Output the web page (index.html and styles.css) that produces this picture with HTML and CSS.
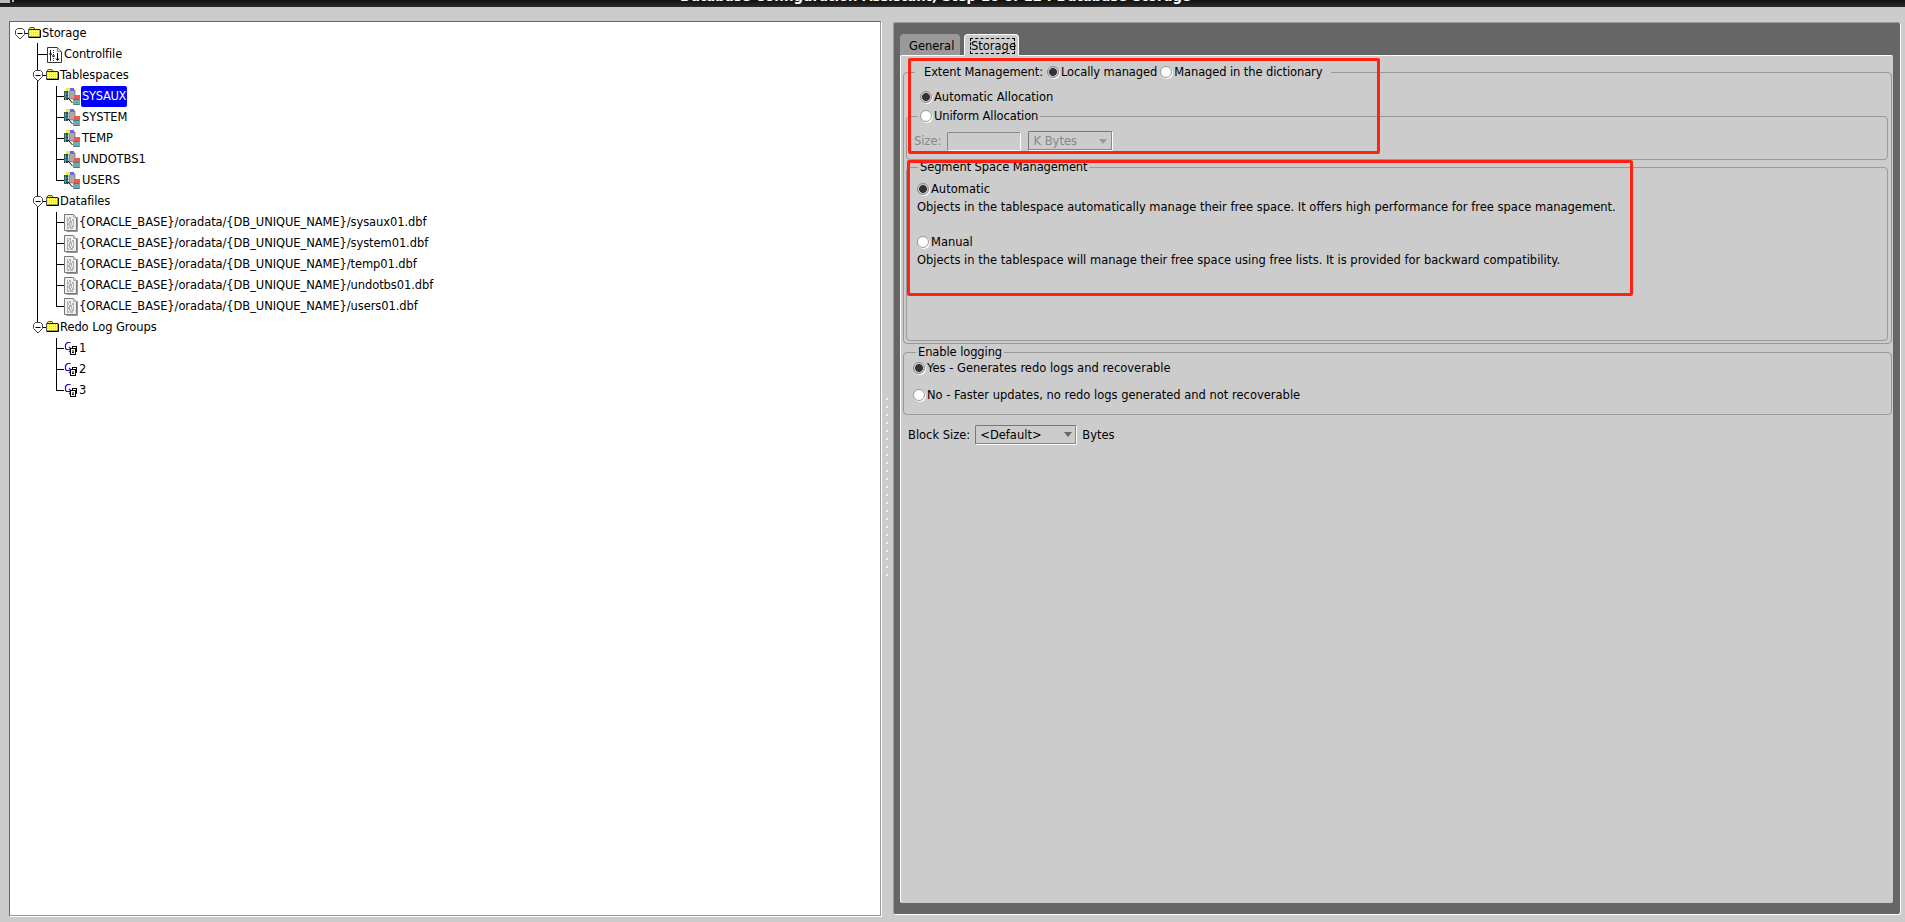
FILE: index.html
```
<!DOCTYPE html>
<html lang="en">
<head>
<meta charset="utf-8">
<title>Database Configuration Assistant</title>
<link rel="stylesheet" href="styles.css">
</head>
<body>
<svg class="defs" width="0" height="0" aria-hidden="true">
  <defs>
    <pattern id="dither" width="2" height="2" patternUnits="userSpaceOnUse">
      <rect width="2" height="2" fill="#ffff55"/>
      <rect width="1" height="1" fill="#fff6a0"/>
      <rect x="1" y="1" width="1" height="1" fill="#e8d830"/>
    </pattern>
    <symbol id="expander" viewBox="0 0 14 12">
      <path d="M9 5.500h5" stroke="#000" fill="none"/>
      <path d="M2.500.5h5l2 2v4l-4.500 4.500-4.500-4.500v-4z" fill="#fff" stroke="#444"/>
      <path d="M2.500 5.500h5" stroke="#000" fill="none"/>
    </symbol>
    <symbol id="folder" viewBox="0 0 13 11">
      <path d="M.5 2.500l1.500-2h4l1 2h5v7.500h-11.500z" fill="url(#dither)" stroke="#555"/>
      <path d="M1 2.500h11" stroke="#222"/>
      <path d="M12.500 3v7.500h-12" stroke="#000" fill="none"/>
    </symbol>
    <symbol id="space" viewBox="0 0 16 17">
      <rect x="5" y="2" width="6" height="9" fill="#aaa" stroke="#555" stroke-width=".6"/>
      <rect x="2" y="0" width="4" height="3" fill="#eeee44"/>
      <rect x="6" y="0" width="4" height="3" fill="#6666ee"/>
      <rect x="0" y="3" width="4" height="9" fill="#1d4d4d"/>
      <path d="M1.500 3v9M0 6h4M0 9h4" stroke="#7aa" stroke-width=".7"/>
      <rect x="10" y="7" width="6" height="4" fill="#ee5555"/>
      <path d="M4 10l4.500 5" stroke="#000"/>
      <rect x="9" y="11" width="7" height="6" rx="1" fill="#3f7f7f"/>
      <path d="M9 13h7M9 15h7" stroke="#cfe" stroke-width=".7"/>
    </symbol>
    <symbol id="control" viewBox="0 0 15 16">
      <path d="M.5.500h10l4 4v11h-14z" fill="#fff" stroke="#333"/>
      <path d="M10.500.500v4h4" fill="#ddd" stroke="#888"/>
      <path d="M3.500 3v11" stroke="#222"/>
      <path d="M6.500 3v11" stroke="#22c" stroke-dasharray="1 1"/>
      <path d="M2 7h3M5 9h3" stroke="#000"/>
      <path d="M10.500 6v7M9 11.500l1.500 2 1.500-2" stroke="#000" fill="none"/>
    </symbol>
    <symbol id="datafile" viewBox="0 0 14 18">
      <path d="M13.500 3v14.500h-11" stroke="#999" fill="none"/>
      <path d="M.5.500h9l3 3v13h-12z" fill="#f0f0f0" stroke="#777"/>
      <path d="M9.500.500v3h3" fill="#ddd" stroke="#aaa"/>
      <path d="M3 4h1M5 4h2M3 6h2M6 6h1M8 6h2M3 8h1M5 8h3M9 8h1M3 10h3M7 10h1M9 10h1M3 12h1M5 12h2M8 12h2M3 14h2M6 14h3" stroke="#777"/>
    </symbol>
    <symbol id="redo" viewBox="0 0 13 13">
      <path d="M6.500.5h-3l-2 2v4l1 1h4" fill="none" stroke="#1010e8" stroke-width="1.200"/>
      <path d="M5 5l2.500 2.500-2.500 2.500" fill="none" stroke="#1010e8" stroke-width="1.200"/>
      <rect x="8.500" y="4.500" width="4" height="5" fill="#fff" stroke="#000"/>
      <rect x="6.500" y="6.500" width="5" height="6" fill="#fff" stroke="#000"/>
      <path d="M8 9h2M8 10.500h2" stroke="#000"/>
    </symbol>
  </defs>
</svg>

<header class="titlebar">
  <svg class="winicon" width="16" height="4" viewBox="0 0 16 4" aria-hidden="true"><path d="M0 0h10v3H0zM12 0h2v2h-2z" fill="#bbb"/></svg>
  <span class="title">Database Configuration Assistant, Step 10 of 12 : Database Storage</span>
</header>

<main class="main">
  <section class="treepane">
    <ul class="tree">
      <li>
        <div class="row"><svg class="exp"><use href="#expander"/></svg><svg class="fld"><use href="#folder"/></svg><span class="lbl">Storage</span></div>
        <ul class="l1">
          <li><div class="row leaf"><svg class="ctl"><use href="#control"/></svg><span class="lbl">Controlfile</span></div></li>
          <li>
            <div class="row"><svg class="exp"><use href="#expander"/></svg><svg class="fld"><use href="#folder"/></svg><span class="lbl">Tablespaces</span></div>
            <ul class="l2">
              <li><div class="row"><svg class="spc"><use href="#space"/></svg><span class="lbl sel">SYSAUX</span></div></li>
              <li><div class="row"><svg class="spc"><use href="#space"/></svg><span class="lbl">SYSTEM</span></div></li>
              <li><div class="row"><svg class="spc"><use href="#space"/></svg><span class="lbl">TEMP</span></div></li>
              <li><div class="row"><svg class="spc"><use href="#space"/></svg><span class="lbl">UNDOTBS1</span></div></li>
              <li><div class="row"><svg class="spc"><use href="#space"/></svg><span class="lbl">USERS</span></div></li>
            </ul>
          </li>
          <li>
            <div class="row"><svg class="exp"><use href="#expander"/></svg><svg class="fld"><use href="#folder"/></svg><span class="lbl">Datafiles</span></div>
            <ul class="l2">
              <li><div class="row"><svg class="dat"><use href="#datafile"/></svg><span class="lbl">{ORACLE_BASE}/oradata/{DB_UNIQUE_NAME}/sysaux01.dbf</span></div></li>
              <li><div class="row"><svg class="dat"><use href="#datafile"/></svg><span class="lbl">{ORACLE_BASE}/oradata/{DB_UNIQUE_NAME}/system01.dbf</span></div></li>
              <li><div class="row"><svg class="dat"><use href="#datafile"/></svg><span class="lbl">{ORACLE_BASE}/oradata/{DB_UNIQUE_NAME}/temp01.dbf</span></div></li>
              <li><div class="row"><svg class="dat"><use href="#datafile"/></svg><span class="lbl">{ORACLE_BASE}/oradata/{DB_UNIQUE_NAME}/undotbs01.dbf</span></div></li>
              <li><div class="row"><svg class="dat"><use href="#datafile"/></svg><span class="lbl">{ORACLE_BASE}/oradata/{DB_UNIQUE_NAME}/users01.dbf</span></div></li>
            </ul>
          </li>
          <li>
            <div class="row"><svg class="exp"><use href="#expander"/></svg><svg class="fld"><use href="#folder"/></svg><span class="lbl">Redo Log Groups</span></div>
            <ul class="l2">
              <li><div class="row"><svg class="rdo"><use href="#redo"/></svg><span class="lbl">1</span></div></li>
              <li><div class="row"><svg class="rdo"><use href="#redo"/></svg><span class="lbl">2</span></div></li>
              <li><div class="row"><svg class="rdo"><use href="#redo"/></svg><span class="lbl">3</span></div></li>
            </ul>
          </li>
        </ul>
      </li>
    </ul>
  </section>

  <div class="divider"><span class="grip"></span></div>

  <section class="tabpane">
    <nav class="tabs">
      <span class="tab">General</span>
      <span class="tab active"><span class="focus">Storage</span></span>
    </nav>
    <div class="panel">
      <fieldset class="box outer">
        <legend class="leg-extent">
          <span class="opt-head">Extent Management:</span>
          <label class="opt"><input type="radio" name="ext" checked><span>Locally managed</span></label>
          <label class="opt"><input type="radio" name="ext"><span>Managed in the dictionary</span></label>
        </legend>
        <label class="opt line first"><input type="radio" name="alloc" checked><span>Automatic Allocation</span></label>
        <fieldset class="box uniform">
          <legend class="leg-uniform"><label class="opt"><input type="radio" name="alloc"><span>Uniform Allocation</span></label></legend>
          <div class="sizerow">
            <span class="off">Size:</span>
            <span class="field"></span>
            <span class="combo off-combo"><span>K Bytes</span><i class="arrow"></i></span>
          </div>
        </fieldset>
        <fieldset class="box segment">
          <legend class="leg-text">Segment Space Management</legend>
          <label class="opt line"><input type="radio" name="seg" checked><span>Automatic</span></label>
          <p class="desc">Objects in the tablespace automatically manage their free space. It offers high performance for free space management.</p>
          <label class="opt line manual"><input type="radio" name="seg"><span>Manual</span></label>
          <p class="desc">Objects in the tablespace will manage their free space using free lists. It is provided for backward compatibility.</p>
        </fieldset>
      </fieldset>
      <fieldset class="box logging">
        <legend class="leg-text">Enable logging</legend>
        <label class="opt line"><input type="radio" name="log" checked><span>Yes - Generates redo logs and recoverable</span></label>
        <label class="opt line no"><input type="radio" name="log"><span>No - Faster updates, no redo logs generated and not recoverable</span></label>
      </fieldset>
      <div class="blockrow">
        <span>Block Size:</span>
        <span class="combo on-combo"><span>&lt;Default&gt;</span><i class="arrow"></i></span>
        <span>Bytes</span>
      </div>
    </div>
  </section>
</main>

<div class="mark mark-a"></div>
<div class="mark mark-b"></div>
</body>
</html>
```

FILE: styles.css
```
* { box-sizing: border-box; }
html, body { height: 100%; }
body {
  margin: 0;
  height: 922px;
  overflow: hidden;
  position: relative;
  display: flex;
  flex-direction: column;
  background: #cccccc;
  color: #000;
  font: 11.5px/16px "DejaVu Sans", sans-serif;
}
.defs { position: absolute; }

.titlebar {
  height: 7px;
  flex: none;
  position: relative;
  overflow: hidden;
  display: flex;
  justify-content: center;
  align-items: flex-end;
  padding: 0 34px 2px 0;
  background: linear-gradient(#111, #2a2a2a);
}
.winicon { position: absolute; left: 0; top: 0; }
.title { color: #fff; font-weight: 700; font-size: 13.3px; line-height: 16px; white-space: nowrap; }

.main { flex: 1; display: flex; min-height: 0; padding: 14px 5px 6px 9px; }

/* tree */
.treepane {
  width: 872px;
  flex: none;
  background: #fff;
  border-top: 1px solid #666;
  border-left: 1px solid #666;
  border-right: 1px solid #999;
  border-bottom: 1px solid #999;
  box-shadow: 1px 1px 0 #fff;
  padding: 1px 0 0 5px;
}
.tree, .tree ul { list-style: none; margin: 0; padding: 0; }
.row { height: 21px; display: flex; align-items: center; position: relative; z-index: 1; }
.lbl { padding: 0 1px; line-height: 21px; white-space: nowrap; letter-spacing: -.08px; }
.sel { background: #0000ff; color: #fff; border-radius: 2px; letter-spacing: -.3px; }
.exp { width: 14px; height: 12px; flex: none; margin-right: -1px; margin-top: 1px; }
.fld { width: 13px; height: 11px; flex: none; margin-right: 0; margin-top: -2px; }
.leaf { padding-left: 14px; }
.ctl { width: 15px; height: 16px; margin-right: 1px; }
.spc { width: 16px; height: 17px; }
.dat { width: 14px; height: 18px; margin-left: 0; margin-right: 0; }
.rdo { width: 13px; height: 13px; margin-top: -1px; margin-right: 1px; }
.spc + .lbl { margin-left: 1px; }

.l1 { margin-left: 18px !important; }
.l1 > li { position: relative; }
.l1 > li::before { content: ""; position: absolute; left: 4px; top: -1px; bottom: 0; width: 1px; background: #000; }
.l1 > li:last-child::before { bottom: auto; height: 11px; }
.l1 > li > .leaf::before { content: ""; position: absolute; left: 4px; top: 10px; width: 10px; height: 1px; background: #000; }

.l2 { margin-left: 19px !important; }
.l2 > li { position: relative; padding-left: 12px; }
.l2 > li::before { content: ""; position: absolute; left: 4px; top: 0; bottom: 0; width: 1px; background: #000; }
.l2 > li:last-child::before { bottom: auto; height: 11px; }
.l2 > li::after { content: ""; position: absolute; left: 4px; top: 10px; width: 8px; height: 1px; background: #000; }

/* divider */
.divider { width: 12px; flex: none; display: flex; justify-content: center; padding-top: 377px; }
.grip {
  width: 2px;
  height: 184px;
  background: repeating-linear-gradient(#f0f0f0 0 2px, transparent 2px 8px);
}

/* tab pane */
.tabpane {
  flex: 1;
  min-width: 0;
  margin: 1px 0 2px 0;
  background: #666;
  border-top: 1px solid #999;
  border-left: 1px solid #999;
  border-radius: 2px;
  box-shadow: 1px 1px 0 #fff;
  padding: 11px 7px 11px 6px;
  display: flex;
  flex-direction: column;
}
.tabs { display: flex; gap: 4px; height: 21px; flex: none; }
.tab {
  height: 21px;
  width: 60px;
  padding: 4px 0 0 9px;
  background: #999;
  border-radius: 4px 4px 0 0;
}
.tab.active {
  width: 55px;
  padding: 3px 0 0 5px;
  background: #ccc;
  border: 1px solid #fff;
  border-bottom: 0;
  height: 22px;
  position: relative;
  z-index: 1;
}
.focus { display: block; width: 45px; height: 16px; padding-left: 1px; outline: 1px dashed #000; outline-offset: -1px; white-space: nowrap; }

.panel {
  flex: 1;
  min-height: 0;
  background: #ccc;
  border-top: 1px solid #fff;
  border-left: 1px solid #fff;
  border-radius: 2px;
  padding: 6px 1px 0 2px;
}

/* group boxes */
.box {
  margin: 0;
  min-width: 0;
  border: 1px solid #999;
  border-radius: 4px;
}
.outer { padding: 7px 3px 2px 2px; }
legend { padding: 0; line-height: 14px; letter-spacing: -.1px; }
.leg-extent { display: flex; align-items: center; height: 20px; margin-left: 9px; padding: 0 9px; gap: 3px; }
.opt { display: inline-flex; align-items: center; white-space: nowrap; }
.opt-head { margin-right: 1px; }
.line { display: flex; height: 16px; }
.first { margin-left: 14px; }
input[type=radio] {
  appearance: none;
  -webkit-appearance: none;
  margin: 0 2px 0 0;
  width: 12px;
  height: 12px;
  flex: none;
  border-radius: 50%;
  border: 1px solid #999;
  background: #fff;
  box-shadow: 1px 1px 0 #fff;
}
input[type=radio]:checked {
  background: radial-gradient(circle, #333 0 3.6px, #ccc 4.2px);
  border-color: #888;
}

.uniform { margin-top: 1px; padding: 5px 0 8px 7px; }
.leg-uniform { height: 20px; margin-left: 4px; padding: 0 2px; display: flex; align-items: center; }
.sizerow { display: flex; align-items: center; height: 20px; gap: 7px; }
.off { color: #888; margin-right: -1px; }
.field {
  width: 74px;
  height: 19px;
  border: 1px solid #888;
  border-right-color: #fff;
  border-bottom-color: #fff;
  border-radius: 2px;
}
.combo {
  height: 20px;
  display: flex;
  align-items: center;
  justify-content: space-between;
  border: 1px solid #777;
  border-right-color: #fff;
  border-bottom-color: #fff;
  border-radius: 2px;
  box-shadow: inset -1px -1px 0 #888;
}
.off-combo { width: 85px; padding: 0 5px 0 4px; color: #888; }
.on-combo { width: 102px; padding: 0 4px 0 4px; }
.arrow { width: 0; height: 0; border: 4px solid transparent; border-top: 5px solid #999; border-bottom: 0; }
.on-combo .arrow { border-top-color: #666; }

.segment { margin-top: 0; padding: 7px 0 72px 10px; }
.leg-text { margin-left: 1px; padding: 0 2px; }
.desc { margin: 2px 0 0; height: 16px; white-space: nowrap; }
.manual { margin-top: 19px; }

.logging { margin-top: 1px; padding: 1px 0 11px 9px; }
.logging .leg-text { margin-left: 3px; }
.no { margin-top: 11px; }

.blockrow { display: flex; align-items: center; height: 21px; margin: 9px 0 0 5px; gap: 5px; }

/* review annotations */
.mark { position: absolute; border: 3px solid #ff2213; border-radius: 2px; pointer-events: none; }
.mark-a { left: 908px; top: 58px; width: 472px; height: 96px; }
.mark-b { left: 907px; top: 160px; width: 726px; height: 136px; }
```
